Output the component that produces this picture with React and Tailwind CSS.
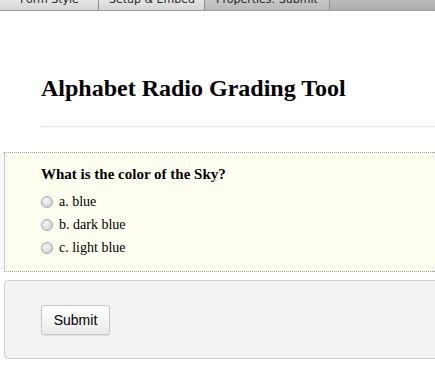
const tabs = [
  { label: 'Form Style', width: 99, textLeft: 20, bg: 'bg-gradient-to-b from-[#e6e6e6] to-[#d4d4d4]' },
  { label: 'Setup & Embed', width: 106, textLeft: 10, bg: 'bg-gradient-to-b from-[#e6e6e6] to-[#d4d4d4]' },
  { label: 'Properties: Submit', width: 125, textLeft: 11, bg: 'bg-gradient-to-b from-[#c8c8c8] to-[#b9b9b9]' },
]

const options = ['a. blue', 'b. dark blue', 'c. light blue']

const Radio = () => (
  <span className="inline-block w-[12px] h-[12px] rounded-full border border-[#a8a8a8] bg-[radial-gradient(circle_at_40%_35%,#f6f6f6_0%,#dedede_55%,#c4c4c4_100%)] shrink-0" />
)

export default function App() {
  return (
    <div className="w-[435px] h-[380px] overflow-hidden bg-white">
      {/* tab strip, scrolled so only the bottom of the labels shows */}
      <div className="flex h-[11px] border-b border-[#9e9e9e] bg-gradient-to-b from-[#bcbcbc] to-[#acacac] font-['DejaVu_Sans',sans-serif] text-[11px] text-[#222]">
        {tabs.map((t) => (
          <div
            key={t.label}
            className={`flex items-end h-[10px] overflow-hidden border-r border-[#8e8e8e] ${t.bg}`}
            style={{ width: t.width, paddingLeft: t.textLeft }}
          >
            <span className="leading-[12px] mb-[4px] whitespace-nowrap">{t.label}</span>
          </div>
        ))}
      </div>

      <div className="pl-[41px] pt-[63px]">
        <h1 className="font-['Liberation_Serif',serif] font-bold text-[24px] leading-[28px] text-black">
          Alphabet Radio Grading Tool
        </h1>
        <div className="mt-[24px] border-t border-[#e4e4e4] mr-[-10px]" />
      </div>

      <div className="pl-[4px] mt-[25px] mr-[-20px]">
        <div className="border border-dotted border-[#9a9a9a] bg-[#fefff0] pl-[36px] pt-[11px] pb-[12px] font-['Liberation_Serif',serif] text-black">
          <div className="font-bold text-[15px] leading-[20px]">What is the color of the Sky?</div>
          <div className="mt-[6px] flex flex-col">
            {options.map((o) => (
              <label key={o} className="flex items-center gap-[6px] h-[23px] text-[14px]">
                <Radio />
                <span>{o}</span>
              </label>
            ))}
          </div>
        </div>

        <div className="mt-[8px] border border-[#cfcfcf] rounded-[4px] bg-[#f3f3f3] pl-[36px] pt-[24px] pb-[23px]">
          <button className="h-[30px] w-[69px] rounded-[3px] border border-[#c6c6c6] bg-gradient-to-b from-[#ffffff] to-[#ebebeb] shadow-[0_1px_1px_rgba(0,0,0,0.08)] font-['Liberation_Sans',sans-serif] text-[14px] text-black">
            Submit
          </button>
        </div>
      </div>
    </div>
  )
}
